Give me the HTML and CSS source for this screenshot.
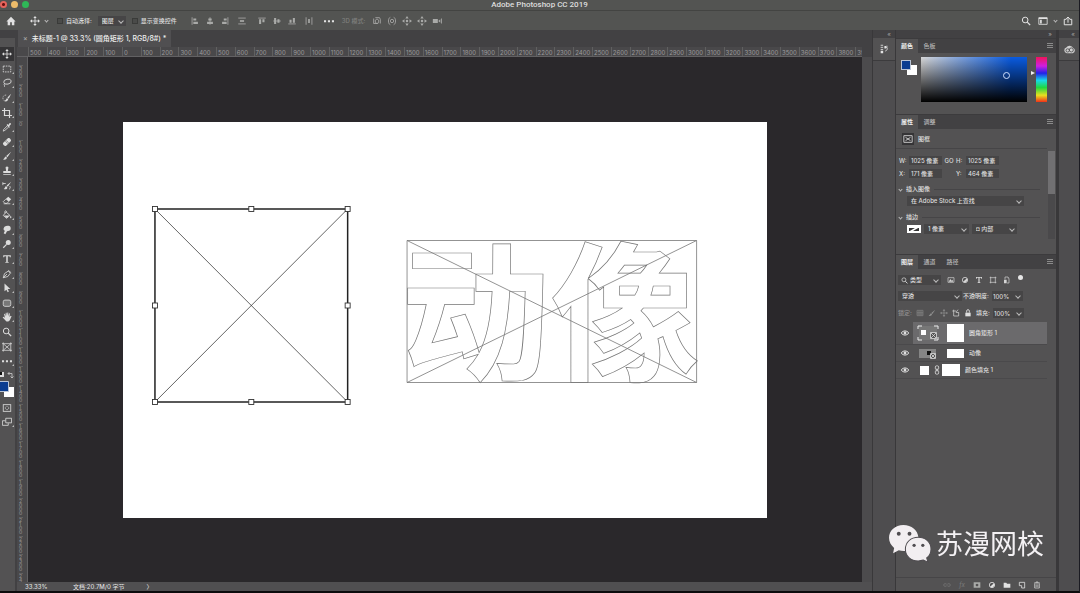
FILE: index.html
```html
<!DOCTYPE html>
<html lang="zh-CN">
<head>
  <meta charset="UTF-8">
  <meta name="viewport" content="width=device-width, initial-scale=1.0">
  <title>Adobe Photoshop CC 2019</title>
  <link rel="stylesheet" href="styles.css">
</head>
<body>
  <!-- icon set -->
  <svg class="sprite" aria-hidden="true">
    <symbol id="i-move" viewBox="0 0 12 12"><path d="M6 2v8M2 6h8" stroke="currentColor"/><path d="M6 0l2 2.500H4zM6 12l2-2.500H4zM0 6l2.500-2v4zM12 6L9.500 4v4z" fill="currentColor"/></symbol>
    <symbol id="i-marquee" viewBox="0 0 12 12"><path d="M1.500 2.500h9v7h-9z" fill="none" stroke="currentColor" stroke-dasharray="2 1"/></symbol>
    <symbol id="i-lasso" viewBox="0 0 12 12"><ellipse cx="6.500" cy="4.500" rx="4.500" ry="3" transform="rotate(-12 6 4)" fill="none" stroke="currentColor"/><path d="M3 6.500c-1.500 1 .5 2 0 4" fill="none" stroke="currentColor"/></symbol>
    <symbol id="i-quick" viewBox="0 0 12 12"><path d="M5 2.500c-6 0-4.500 8 .5 7.500" fill="none" stroke="currentColor" stroke-dasharray="1 1"/><path d="M11 1L6.500 5.500l1.500 1.500zM6 6c-1 1-1 2.500-3 3.500 2.500 1 4 0 4.500-2z" fill="currentColor"/></symbol>
    <symbol id="i-crop" viewBox="0 0 12 12"><path d="M3 0v9h9M0 3h9v9" fill="none" stroke="currentColor" stroke-width="1.400"/></symbol>
    <symbol id="i-dropper" viewBox="0 0 12 12"><path d="M6.500 4.500L2 9l-.5 2L3.500 10 8 6" fill="none" stroke="currentColor"/><path d="M5.500 3.500l1-1 1 1L9 1.500c1-1 2.500.5 1.500 1.500L8.500 5l1 1-1 1z" fill="currentColor"/></symbol>
    <symbol id="i-heal" viewBox="0 0 12 12"><path d="M7 1.500c1.500-1.500 5 2 3.500 3.500L5 10.500C3.500 12 0 8.500 1.500 7z" fill="currentColor"/><path d="M5 4l3 3M4 5l3 3" stroke="#535253" stroke-width=".7"/></symbol>
    <symbol id="i-brush" viewBox="0 0 12 12"><path d="M11 1L5 6l1.500 1.500zM4.500 6.500C3 7 3.500 9 1 10c2.500 1 4.500 0 5-2z" fill="currentColor"/></symbol>
    <symbol id="i-stamp" viewBox="0 0 12 12"><path d="M4.500 3a1.700 1.700 0 1 1 3 0L7 6h3.500v2.500h-9V6H5zM1.500 9.500h9v1h-9z" fill="currentColor"/></symbol>
    <symbol id="i-history" viewBox="0 0 12 12"><path d="M11 1L5.500 5.500 7 7zM5 6C3.500 6.500 4 8.500 2 9.500c2.500 1 4 0 4.500-1.500z" fill="currentColor"/><path d="M1 3h3.500M1 1.500V5M9 6c1.500 1 1 3-.5 4" fill="none" stroke="currentColor"/></symbol>
    <symbol id="i-eraser" viewBox="0 0 12 12"><path d="M7.500 2L11 5 8 8 4.500 4.800z" fill="currentColor"/><path d="M4.500 5L1.500 8l2 2h2.500L8 8M2 10.500h8" fill="none" stroke="currentColor"/></symbol>
    <symbol id="i-bucket" viewBox="0 0 12 12"><path d="M5 2.500L9.500 6.500 5.500 10 1.500 6.500zM3.500 4V1.500c1-1 2-.5 2 1" fill="none" stroke="currentColor"/><path d="M2.500 6.500h6.500l-3.500 3zM10.500 6.500c1 1.500 1 3 0 3.500-1-.5-1-2 0-3.500z" fill="currentColor"/></symbol>
    <symbol id="i-smudge" viewBox="0 0 12 12"><path d="M3 2c2-1.500 6-1.500 7 0 1 2 .5 4-1.500 5L6 7.500 4 11 2 10l1.500-3C1 6 2 3 3 2z" fill="currentColor"/></symbol>
    <symbol id="i-dodge" viewBox="0 0 12 12"><circle cx="7.500" cy="4.200" r="3" fill="currentColor"/><path d="M5.500 6.500L1.500 10.500" stroke="currentColor" stroke-width="1.400"/></symbol>
    <symbol id="i-type" viewBox="0 0 12 12"><path d="M1.500 1.500h9v2.500h-1L9 2.800H6.900v6.700H8v1H4v-1h1.100V2.800H3L2.500 4h-1z" fill="currentColor"/></symbol>
    <symbol id="i-pen" viewBox="0 0 12 12"><path d="M1.500 10.500L3 5.500l4.500-3 2.500 2.500-3 4zM1.500 10.500L6 6M7.500 1.500l3.500 3" fill="none" stroke="currentColor"/></symbol>
    <symbol id="i-arrow" viewBox="0 0 12 12"><path d="M3 .5v9.500l2.300-2L6.800 11l1.500-.7-1.500-3H10z" fill="currentColor"/></symbol>
    <symbol id="i-rect" viewBox="0 0 12 12"><rect x="1.500" y="2.500" width="9" height="7.500" rx="2" fill="#777" stroke="currentColor"/></symbol>
    <symbol id="i-hand" viewBox="0 0 12 12"><path d="M3.500 2l.7 3 .3-4h1l.4 3.500L6.500.5h1V5l1-3.500 1 .3L9 6l1.500-1.500 1 .5-2 4.500C8 12 5 12 4 10L.8 6.500l1-.8L3.500 7 2.500 2.500z" fill="currentColor"/></symbol>
    <symbol id="i-zoom" viewBox="0 0 12 12"><circle cx="5" cy="4.800" r="3.400" fill="none" stroke="currentColor" stroke-width="1.200"/><path d="M7.500 7.300L11 11" stroke="currentColor" stroke-width="1.600"/></symbol>
    <symbol id="i-frame" viewBox="0 0 12 12"><path d="M0 2h12M0 10h12M1.500 .5v11M10.500 .5v11M2 2.500l8 7M10 2.500l-8 7" fill="none" stroke="currentColor" stroke-width=".9"/></symbol>
    <symbol id="i-framebox" viewBox="0 0 12 12"><path d="M1 2h10v8H1zM3 4l6 4M9 4L3 8" fill="none" stroke="currentColor"/></symbol>
    <symbol id="i-dots" viewBox="0 0 12 12"><path d="M0 5h2.500v2.500H0zM4.700 5h2.500v2.500H4.700zM9.500 5H12v2.500H9.500z" fill="currentColor"/></symbol>
    <symbol id="i-mask" viewBox="0 0 12 12"><rect x="1.500" y="2" width="9" height="8" fill="none" stroke="currentColor"/><circle cx="6" cy="6" r="2" fill="none" stroke="currentColor" stroke-dasharray="1 .6"/></symbol>
    <symbol id="i-screen" viewBox="0 0 12 12"><path d="M4.500 1.500h7v5.500h-7zM4 4.500H.5v5.500h7V7.500" fill="none" stroke="currentColor"/></symbol>
    <symbol id="i-home" viewBox="0 0 12 12"><path d="M6 1L.5 6.500H2V11h3V7.500h2V11h3V6.500h1.500z" fill="currentColor"/></symbol>
    <symbol id="i-al" viewBox="0 0 12 12"><path d="M2.500 1.500v9" stroke="currentColor"/><path d="M4 3h3.500v2.500H4zM4 7h5.500v2.500H4z" fill="currentColor"/></symbol>
    <symbol id="i-ac" viewBox="0 0 12 12"><path d="M6 1.500v9" stroke="currentColor"/><path d="M4 3h4v2.500H4zM2.500 7h7v2.500h-7z" fill="currentColor"/></symbol>
    <symbol id="i-dist" viewBox="0 0 12 12"><path d="M1.500 2.500h9M1.500 9.500h9" stroke="currentColor"/><path d="M3.500 5h5v2h-5z" fill="currentColor"/></symbol>
    <symbol id="i-orbit" viewBox="0 0 12 12"><path d="M2 3v6h5M4 2h5l1 2v5M4 5l2-1.500L8 5v3L6 9 4 8z" fill="none" stroke="currentColor"/></symbol>
    <symbol id="i-roll" viewBox="0 0 12 12"><circle cx="6" cy="6" r="2" fill="none" stroke="currentColor"/><path d="M4 1.500c-3 1-3 8 0 9M8 1.500c3 1 3 8 0 9" fill="none" stroke="currentColor"/></symbol>
    <symbol id="i-slide" viewBox="0 0 12 12"><circle cx="6" cy="6" r="1.500" fill="currentColor"/><path d="M6 0l2 3H4zM6 12l2-3H4zM0 6l3-2v4zM12 6L9 4v4z" fill="currentColor"/></symbol>
    <symbol id="i-cam" viewBox="0 0 12 12"><path d="M1 3.500h6v5H1zM7.500 6L10 4v4zM11 3h1v6h-1z" fill="currentColor"/></symbol>
    <symbol id="i-layout" viewBox="0 0 12 12"><path d="M1 2h10v8H1z" fill="none" stroke="currentColor"/><path d="M1 2h10v1.500H1zM2.500 4.500h2v4.500h-2z" fill="currentColor"/></symbol>
    <symbol id="i-share" viewBox="0 0 12 12"><path d="M4 4H1.500v6.500h9V4H8M6 8V1.500M3.800 3.500L6 1.200l2.200 2.300" fill="none" stroke="currentColor" stroke-width="1.200"/></symbol>
    <symbol id="i-panel" viewBox="0 0 12 12"><path d="M2 1.500h3M2 4h3M2 6.500h3M7 4h2.500V2M9.500 4c1 2 0 4-2 4.500" fill="none" stroke="currentColor"/><path d="M2 8h3v3H2zM6.500 2.500h2v3h-2z" fill="currentColor"/></symbol>
    <symbol id="i-cc" viewBox="0 0 14 12"><path d="M4 10a3.200 3.200 0 0 1-.5-6.200 4.300 4.300 0 0 1 7.500.5A3 3 0 0 1 10.500 10z" fill="#cfcfcf"/><circle cx="5" cy="7" r="1.800" fill="none" stroke="#535253"/><circle cx="9" cy="6.500" r="2.200" fill="none" stroke="#535253"/></symbol>
    <symbol id="i-image" viewBox="0 0 12 12"><path d="M1.500 2.500h9v7h-9z" fill="none" stroke="currentColor"/><path d="M2.500 8.500l2.500-4 2 2.500 1-1.500 1.500 3z" fill="currentColor"/></symbol>
    <symbol id="i-adjust" viewBox="0 0 12 12"><circle cx="6" cy="6" r="4" fill="none" stroke="currentColor" stroke-width="1.200"/><path d="M8.800 3.200a4 4 0 0 1-5.600 5.600z" fill="currentColor"/></symbol>
    <symbol id="i-shape" viewBox="0 0 12 12"><path d="M2.500 1v10M9.500 1v10M1 2.500h10M1 9.500h10" stroke="currentColor"/></symbol>
    <symbol id="i-smart" viewBox="0 0 12 12"><path d="M3 5V1.500h4l2 2v7H6" fill="none" stroke="currentColor"/><path d="M1.500 5.500h4V11h-4zM7 1.500v2h2" fill="currentColor"/></symbol>
    <symbol id="i-grid" viewBox="0 0 12 12"><path d="M1.500 2h9v8h-9zM4.500 2v8M7.500 2v8M1.500 5h9M1.500 7.500h9" fill="none" stroke="currentColor" stroke-width=".8"/></symbol>
    <symbol id="i-lock" viewBox="0 0 12 12"><path d="M2 5.500h8v5.500H2z" fill="currentColor"/><path d="M4 5.500V3a2 2 0 0 1 4 0v2.500" fill="none" stroke="currentColor" stroke-width="1.300"/></symbol>
    <symbol id="i-board" viewBox="0 0 12 12"><path d="M2.500 1v9.500H10V5M0.500 3H6M9 1L6 5l4 .5" fill="none" stroke="currentColor"/></symbol>
    <symbol id="i-eye" viewBox="0 0 12 12"><path d="M1.500 6C3.500 2.700 8.500 2.700 10.500 6 8.500 9.300 3.500 9.300 1.500 6z" fill="none" stroke="currentColor" stroke-width="1.200"/><circle cx="6" cy="6" r="1.700" fill="currentColor"/></symbol>
    <symbol id="i-link" viewBox="0 0 12 12"><rect x="4" y="1" width="4" height="4.500" rx="1.500" fill="none" stroke="currentColor"/><rect x="4" y="6.500" width="4" height="4.500" rx="1.500" fill="none" stroke="currentColor"/><path d="M6 4v4" stroke="currentColor"/></symbol>
    <symbol id="i-hlink" viewBox="0 0 12 12"><path d="M5 4H3a2 2 0 0 0 0 4h2M7 4h2a2 2 0 0 1 0 4H7M4 6h4" fill="none" stroke="currentColor"/></symbol>
    <symbol id="i-maskadd" viewBox="0 0 12 12"><path d="M1 2h10v8H1zM6 4a2 2 0 1 0 .1 0z" fill="currentColor" fill-rule="evenodd"/></symbol>
    <symbol id="i-folder" viewBox="0 0 12 12"><path d="M1 2.500h4l1 1.500h5v6H1z" fill="currentColor"/></symbol>
    <symbol id="i-new" viewBox="0 0 12 12"><path d="M2 2h8v8.500H5.500V7H2z" fill="none" stroke="currentColor" stroke-width="1.200"/></symbol>
    <symbol id="i-trash" viewBox="0 0 12 12"><path d="M1.500 3h9M4.500 3V1.500h3V3M2.500 4v6.500h7V4M4.700 5v4M7.300 5v4" fill="none" stroke="currentColor"/></symbol>
  </svg>

  <header class="titlebar">
    <div class="lights"><i class="red"></i><i class="yellow"></i><i class="green"></i></div>
    <h1>Adobe Photoshop CC 2019</h1>
  </header>

  <div class="options">
    <button class="ic bright home" aria-label="主页"><svg><use href="#i-home"/></svg></button>
    <button class="ic bright" aria-label="移动工具"><svg><use href="#i-move"/></svg></button>
    <i class="chev"></i>
    <label class="check auto"><input type="checkbox">自动选择:</label>
    <span class="sel layer-sel"><select aria-label="自动选择"><option>图层</option></select></span>
    <label class="check show"><input type="checkbox">显示变换控件</label>
    <div class="icons">
      <button class="ic" aria-label="左对齐"><svg><use href="#i-al"/></svg></button>
      <button class="ic" aria-label="水平居中"><svg><use href="#i-ac"/></svg></button>
      <button class="ic flip-x" aria-label="右对齐"><svg><use href="#i-al"/></svg></button>
      <button class="ic wide" aria-label="垂直分布"><svg><use href="#i-dist"/></svg></button>
    </div>
    <div class="icons">
      <button class="ic turn" aria-label="顶对齐"><svg><use href="#i-al"/></svg></button>
      <button class="ic turn" aria-label="垂直居中"><svg><use href="#i-ac"/></svg></button>
      <button class="ic turn-back" aria-label="底对齐"><svg><use href="#i-al"/></svg></button>
      <button class="ic turn wide" aria-label="水平分布"><svg><use href="#i-dist"/></svg></button>
    </div>
    <button class="ic bright more" aria-label="更多"><svg><use href="#i-dots"/></svg></button>
    <span class="mode">3D 模式:</span>
    <div class="icons mode-icons">
      <button class="ic" aria-label="环绕"><svg><use href="#i-orbit"/></svg></button>
      <button class="ic" aria-label="滚动"><svg><use href="#i-roll"/></svg></button>
      <button class="ic" aria-label="平移"><svg><use href="#i-slide"/></svg></button>
      <button class="ic" aria-label="滑动"><svg><use href="#i-slide"/></svg></button>
      <button class="ic" aria-label="缩放相机"><svg><use href="#i-cam"/></svg></button>
    </div>
    <div class="right">
      <button class="ic bright" aria-label="搜索"><svg><use href="#i-zoom"/></svg></button>
      <button class="ic bright" aria-label="工作区"><svg><use href="#i-layout"/></svg></button>
      <i class="chev"></i>
      <button class="ic bright" aria-label="共享"><svg><use href="#i-share"/></svg></button>
    </div>
  </div>

  <main class="workspace">
    <nav class="toolbar" aria-label="工具">
      <div class="grip"></div>
      <div class="tools">
        <button class="tool active" aria-label="移动"><svg><use href="#i-move"/></svg></button>
        <button class="tool" aria-label="选框"><svg><use href="#i-marquee"/></svg></button>
        <button class="tool" aria-label="套索"><svg><use href="#i-lasso"/></svg></button>
        <button class="tool" aria-label="快速选择"><svg><use href="#i-quick"/></svg></button>
        <button class="tool" aria-label="裁剪"><svg><use href="#i-crop"/></svg></button>
        <button class="tool" aria-label="吸管"><svg><use href="#i-dropper"/></svg></button>
        <button class="tool" aria-label="修复画笔"><svg><use href="#i-heal"/></svg></button>
        <button class="tool" aria-label="画笔"><svg><use href="#i-brush"/></svg></button>
        <button class="tool" aria-label="图章"><svg><use href="#i-stamp"/></svg></button>
        <button class="tool" aria-label="历史画笔"><svg><use href="#i-history"/></svg></button>
        <button class="tool" aria-label="橡皮擦"><svg><use href="#i-eraser"/></svg></button>
        <button class="tool" aria-label="油漆桶"><svg><use href="#i-bucket"/></svg></button>
        <button class="tool" aria-label="涂抹"><svg><use href="#i-smudge"/></svg></button>
        <button class="tool" aria-label="减淡"><svg><use href="#i-dodge"/></svg></button>
        <button class="tool" aria-label="文字"><svg><use href="#i-type"/></svg></button>
        <button class="tool" aria-label="钢笔"><svg><use href="#i-pen"/></svg></button>
        <button class="tool" aria-label="路径选择"><svg><use href="#i-arrow"/></svg></button>
        <button class="tool" aria-label="圆角矩形"><svg><use href="#i-rect"/></svg></button>
        <button class="tool" aria-label="抓手"><svg><use href="#i-hand"/></svg></button>
        <button class="tool plain" aria-label="缩放"><svg><use href="#i-zoom"/></svg></button>
        <button class="tool plain" aria-label="图框"><svg><use href="#i-frame"/></svg></button>
        <button class="tool" aria-label="编辑工具栏"><svg><use href="#i-dots"/></svg></button>
      </div>
      <svg class="swatches" viewBox="0 0 16 28">
        <path d="M0 1h4v5H0z" fill="#ddd"/><path d="M0 1h2v3H0z" fill="#111"/>
        <path d="M8 2.500h4V7M9.500 1L8 2.500 9.500 4M10.500 5.500L12 7l1.500-1.500" fill="none" stroke="#ccc" stroke-width=".8"/>
        <path d="M4 16h10v10H4z" fill="#fff"/>
        <path d="M-1 10.500h9.500v10H-1z" fill="#0b3d91" stroke="#b9c4d6"/>
      </svg>
      <button class="tool plain" aria-label="快速蒙版"><svg><use href="#i-mask"/></svg></button>
      <button class="tool" aria-label="屏幕模式"><svg><use href="#i-screen"/></svg></button>
    </nav>

    <section class="document">
      <div class="doc-tabs">
        <button class="doc-tab"><span class="close">×</span>未标题-1 @ 33.3% (圆角矩形 1, RGB/8#) *</button>
      </div>
      <div class="ruler-top"><div class="marks" id="marks-x"></div></div>
      <div class="view">
        <div class="ruler-left"><div class="marks" id="marks-y"></div></div>
        <div class="canvas">
          <svg class="artboard" viewBox="0 0 645 396" preserveAspectRatio="none">
            <g fill="none" stroke="#222">
              <rect x="32" y="87" width="193" height="193" stroke-width="1.500"/>
              <path d="M32 87l193 193M225 87L32 280" stroke-width=".7"/>
            </g>
            <g fill="#fff" stroke="#333" stroke-width=".9">
              <rect x="29.500" y="84.500" width="5" height="5"/><rect x="126" y="84.500" width="5" height="5"/><rect x="222.500" y="84.500" width="5" height="5"/>
              <rect x="29.500" y="181" width="5" height="5"/><rect x="222.500" y="181" width="5" height="5"/>
              <rect x="29.500" y="277.500" width="5" height="5"/><rect x="126" y="277.500" width="5" height="5"/><rect x="222.500" y="277.500" width="5" height="5"/>
            </g>
            <text class="outline-text" x="278" y="247">动像</text>
            <path d="M284.500 118.500h290v142h-290zM284.500 118.500l290 142M574.500 118.500l-290 142" fill="none" stroke="#777" stroke-width=".8"/>
          </svg>
        </div>
        <div class="scroll"></div>
      </div>
      <footer class="status"><span class="pct">33.33%</span><span>文档:20.7M/0 字节</span><span class="next">〉</span></footer>
    </section>

    <aside class="strip">
      <div class="strip-head">«</div>
      <button class="strip-btn" aria-label="历史记录"><svg><use href="#i-panel"/></svg></button>
    </aside>

    <aside class="panels">
      <div class="strip-head">»</div>

      <section class="panel color">
        <div class="tabs"><button class="on">颜色</button><button>色板</button><i class="menu"></i></div>
        <div class="color-body">
          <div class="fgbg"></div>
          <div class="field"><i class="ring"></i></div>
          <div class="hue"></div>
        </div>
      </section>

      <section class="panel props">
        <div class="tabs"><button class="on">属性</button><button>调整</button><i class="menu"></i></div>
        <div class="props-wrap">
          <div class="kind"><span class="kind-icon"><svg><use href="#i-framebox"/></svg></span>图框</div>
          <div class="props-body">
            <div class="fields">
              <div class="size">
                <label for="w">W:</label><input id="w" value="1025 像素"><span class="co">GO</span><label for="h">H:</label><input id="h" value="1025 像素">
                <label for="x">X:</label><input id="x" value="171 像素"><span></span><label for="y">Y:</label><input id="y" value="464 像素">
              </div>
              <h2><i class="chev"></i>插入图像</h2>
              <span class="sel stock"><select aria-label="插入图像"><option>在 Adobe Stock 上查找</option></select></span>
              <h2><i class="chev"></i>描边</h2>
              <div class="stroke">
                <svg class="nostroke" viewBox="0 0 14 8"><path d="M0 0h14v8H0z" fill="#fff"/><path d="M2 3h10v3H2z" fill="#333"/><path d="M1 8L13 1" stroke="#fff" stroke-width="1.500"/></svg>
                <span class="sel"><select aria-label="描边宽度"><option>1 像素</option></select></span>
                <span class="sel"><select aria-label="描边位置"><option>◘ 内部</option></select></span>
              </div>
            </div>
            <div class="bar"><i></i></div>
          </div>
        </div>
      </section>

      <section class="panel layers">
        <div class="tabs"><button class="on">图层</button><button>通道</button><button>路径</button><i class="menu"></i></div>
        <div class="filter">
          <span class="sel kind-sel"><svg><use href="#i-zoom"/></svg><select aria-label="滤镜类型"><option>类型</option></select></span>
          <button class="ic" aria-label="像素"><svg><use href="#i-image"/></svg></button>
          <button class="ic" aria-label="调整"><svg><use href="#i-adjust"/></svg></button>
          <button class="ic" aria-label="文字"><svg><use href="#i-type"/></svg></button>
          <button class="ic" aria-label="形状"><svg><use href="#i-shape"/></svg></button>
          <button class="ic" aria-label="智能对象"><svg><use href="#i-smart"/></svg></button>
          <i class="dot"></i>
        </div>
        <div class="blend">
          <span class="sel blend-sel"><select aria-label="混合模式"><option>穿透</option></select></span>
          <label for="op">不透明度:</label><span class="sel num"><input id="op" value="100%"></span>
        </div>
        <div class="blend locks">
          <span class="dim">锁定:</span>
          <svg class="dim"><use href="#i-grid"/></svg><svg class="dim"><use href="#i-brush"/></svg><svg class="dim"><use href="#i-move"/></svg><svg><use href="#i-board"/></svg><svg><use href="#i-lock"/></svg>
          <label for="fill">填充:</label><span class="sel num"><input id="fill" value="100%"></span>
        </div>
        <ul class="list">
          <li class="row big selected">
            <button class="eye" aria-label="可见性"><svg><use href="#i-eye"/></svg></button>
            <div class="cell">
              <svg class="thumb" viewBox="0 0 24 16"><path d="M2 1h18v14H2z" fill="#777"/><path d="M1 4V1h4M17 1h4v3M1 12v3h4M17 15h4v-3" fill="none" stroke="#eee"/><path d="M4 5h5v5H4z" fill="#fff"/><path d="M13.500 7.500h6v6h-6zM14 8l5 5M19 8l-5 5" fill="#555" stroke="#ddd" stroke-width=".8"/></svg>
              <i class="mask"></i><span>圆角矩形 1</span>
            </div>
          </li>
          <li class="row">
            <button class="eye" aria-label="可见性"><svg><use href="#i-eye"/></svg></button>
            <div class="cell">
              <svg class="thumb" viewBox="0 0 24 16"><path d="M2 4h17v9H2z" fill="#858585"/><path d="M10 6h4v4h-4z" fill="#111"/><path d="M13.500 8.500h5v5h-5zM14 9l4 4M18 9l-4 4" fill="#555" stroke="#ddd" stroke-width=".8"/></svg>
              <i class="mask"></i><span>动像</span>
            </div>
          </li>
          <li class="row fill">
            <button class="eye" aria-label="可见性"><svg><use href="#i-eye"/></svg></button>
            <div class="cell"><i class="chip"></i><svg class="chain"><use href="#i-link"/></svg><i class="mask"></i><span>颜色填充 1</span></div>
          </li>
        </ul>
        <div class="layer-foot">
          <button class="ic dim" aria-label="链接"><svg><use href="#i-hlink"/></svg></button>
          <button class="ic dim fx" aria-label="样式">fx</button>
          <button class="ic" aria-label="蒙版"><svg><use href="#i-maskadd"/></svg></button>
          <button class="ic bright" aria-label="调整图层"><svg><use href="#i-adjust"/></svg></button>
          <button class="ic bright" aria-label="新建组"><svg><use href="#i-folder"/></svg></button>
          <button class="ic bright" aria-label="新建图层"><svg><use href="#i-new"/></svg></button>
          <button class="ic bright" aria-label="删除"><svg><use href="#i-trash"/></svg></button>
        </div>
      </section>
    </aside>

    <aside class="strip last">
      <div class="strip-head">«</div>
      <button class="strip-btn" aria-label="库"><svg><use href="#i-cc"/></svg></button>
    </aside>
  </main>

  <div class="watermark">
    <svg viewBox="0 0 42 38">
      <path d="M15 1C7 1 1 6.500 1 13.500c0 4 2 7.500 5 9.800L5 28.500l5.500-2.800c2 .5 4 .8 6.500.6C29 25.500 30 19 29.700 13 29 6 23 1 15 1z" fill="#f2eef1"/>
      <circle cx="10.500" cy="9.500" r="1.900" fill="#4f4c50"/><circle cx="21" cy="9.500" r="1.900" fill="#4f4c50"/>
      <path d="M29.500 13C22 13 17 18 17 24.500S22 36 29.500 36c1.800 0 3.500-.3 5-.8l4.500 2-1.200-4.200c2.700-2 4.200-5 4.200-8.500C42 18 37 13 29.500 13z" fill="#f2eef1" stroke="#4f4c50"/>
      <circle cx="25.500" cy="20.800" r="1.600" fill="#4f4c50"/><circle cx="34" cy="20.800" r="1.600" fill="#4f4c50"/>
    </svg>
    <span>苏漫网校</span>
  </div>

  <script>
    // ruler labels, one mark for every 100 px
    function fillRuler(id, from, to) {
      const marks = document.getElementById(id);
      for (let n = from; n <= to; n++) {
        const mark = document.createElement('span');
        mark.textContent = Math.abs(n * 100);
        marks.appendChild(mark);
      }
    }
    fillRuler('marks-x', -5, 39);
    fillRuler('marks-y', -3, 24);
  </script>
</body>
</html>
```
FILE: styles.css
```css
:root {
  --bar: #535452;
  --panel: #535253;
  --dark: #424143;
  --field: #464546;
  --line: #3c3b3d;
  --canvas: #2a282b;
  --text: #dedede;
  --muted: #a8a8a8;
}

* {
  margin: 0;
  padding: 0;
  box-sizing: border-box;
}

body {
  display: flex;
  flex-direction: column;
  height: 100vh;
  overflow: hidden;
  background: var(--panel);
  border-right: 1px solid #1b1b22;
  border-bottom: 2px solid #0c0b0c;
  color: var(--text);
  font: 500 6px/8px Inter, "Noto Sans CJK SC", sans-serif;
}

button, input, select {
  font: inherit;
  color: inherit;
  background: none;
  border: 0;
  border-radius: 0;
  outline: 0;
}

i { font-style: normal; }
svg { display: block; width: 10px; height: 10px; flex: none; }
.sprite { position: absolute; width: 0; height: 0; }

.chev {
  width: 3px;
  height: 3px;
  border: solid #bbb;
  border-width: 0 1px 1px 0;
  transform: rotate(45deg);
  flex: none;
}

.ic {
  display: flex;
  align-items: center;
  justify-content: center;
  width: 12px;
  height: 12px;
  color: #a9aaa8;
  flex: none;
}
.ic.bright { color: #e2e2e2; }
.dim { color: #909090; }
.flip-x svg { transform: scaleX(-1); }
.turn svg { transform: rotate(90deg); }
.turn-back svg { transform: rotate(-90deg); }

/* title bar */
.titlebar {
  position: relative;
  height: 11px;
  background: var(--bar);
  border-bottom: 1px solid #434442;
  flex: none;
}
.titlebar h1 {
  font: 500 8px/10px Roboto, sans-serif;
  text-align: center;
}
.lights {
  position: absolute;
  left: 0;
  top: 1px;
  display: flex;
  gap: 4px;
}
.lights i { width: 7px; height: 7px; border-radius: 50%; }
.red { background: radial-gradient(circle, #611 1px, #e8635b 2px); }
.yellow { background: #eebc6a; }
.green { background: #2fb757; }

/* options bar */
.options {
  display: flex;
  align-items: center;
  height: 19px;
  padding: 0 5px;
  background: var(--bar);
  flex: none;
}
.home { margin-right: 12px; }
.options > .chev { margin-left: 4px; }
.check { display: flex; align-items: center; gap: 3px; white-space: nowrap; }
.check input {
  appearance: none;
  width: 6px;
  height: 6px;
  border: 1px solid #3a3b39;
  background: #4a4b49;
}
.auto { margin-left: 9px; }
.layer-sel { width: 28px; margin: 0 6px; }
.show { width: 57px; }
.icons { display: flex; gap: 3px; }
.wide { margin-left: 2px; }
.icons + .icons { margin-left: 8px; }
.more { margin: 0 7px 0 8px; }
.mode { color: #7f807e; width: 29px; white-space: nowrap; }
.right { display: flex; align-items: center; gap: 5px; margin-left: auto; }

.sel {
  position: relative;
  display: flex;
  align-items: center;
  height: 10px;
  background: var(--field);
}
.sel select, .sel input {
  appearance: none;
  width: 100%;
  min-width: 0;
  height: 10px;
  padding: 0 9px 0 4px;
}
.sel::after {
  content: "";
  position: absolute;
  right: 3px;
  top: 3px;
  width: 3px;
  height: 3px;
  border: solid #bbb;
  border-width: 0 1px 1px 0;
  transform: rotate(45deg);
}

.workspace { display: flex; flex: 1; min-height: 0; background: var(--dark); }

/* tools */
.toolbar {
  display: flex;
  flex-direction: column;
  width: 17px;
  background: var(--panel);
  border-right: 2px solid var(--dark);
}
.grip { height: 8px; margin-bottom: 9px; background: var(--dark); }
.tools { display: grid; grid-auto-rows: 1fr; height: 322px; }
.tool {
  position: relative;
  display: flex;
  align-items: center;
  justify-content: center;
  width: 14px;
  height: 14px;
  color: #dcdcdc;
}
.tool.active { background: #353436; }
.tool::after {
  content: "";
  position: absolute;
  right: 0;
  bottom: 2px;
  border: 1px solid;
  border-color: transparent #bbb #bbb transparent;
}
.tool.plain::after, .tool.active::after { display: none; }
.swatches { width: 16px; height: 28px; margin: 2px 0; }

/* document */
.document { display: flex; flex-direction: column; flex: 1; min-width: 0; }
.doc-tabs { display: flex; height: 17px; }
.doc-tab {
  display: flex;
  align-items: center;
  gap: 4px;
  padding: 0 5px;
  margin-left: 1px;
  background: #504f51;
  color: #eee;
  font-size: 7px;
  white-space: nowrap;
}
.close { color: #aaa; }
.ruler-top {
  height: 10px;
  padding-left: 11px;
  margin-right: 10px;
  overflow: hidden;
  background: #49484a;
  border-bottom: 1px solid #626163;
  color: #9b9a9c;
  font-weight: 400;
  line-height: 11px;
}
.ruler-top .marks {
  display: grid;
  grid-auto-flow: column;
  grid-auto-columns: 1fr;
  width: calc(100% + 12px);
}
.ruler-top span { border-left: 1px solid #606060; padding-left: 1px; min-width: 0; }
.view { display: flex; flex: 1; min-height: 0; }
.ruler-left {
  width: 11px;
  overflow: hidden;
  padding: 8px 4px 0 2px;
  background: #49484a;
  border-right: 1px solid #626163;
  color: #8d8c8e;
}
.ruler-left .marks { display: grid; grid-auto-rows: 1fr; height: calc(100% + 10px); }
.ruler-left span {
  width: 4px;
  min-height: 0;
  border-top: 1px solid #606060;
  font-size: 5px;
  line-height: 4px;
  word-break: break-all;
}
.canvas { flex: 1; display: flex; padding: 65px 95px 64px; background: var(--canvas); min-width: 0; }
.artboard { flex: 1; width: auto; height: 100%; min-width: 0; background: #fff; }
.outline-text {
  font: 700 150px "Noto Sans CJK SC", sans-serif;
  fill: none;
  stroke: #777;
  stroke-width: .7px;
}
.scroll { width: 10px; background: #4c4b4d; }
.status {
  display: flex;
  align-items: center;
  height: 9px;
  padding-left: 8px;
  background: #504f51;
}
.pct { width: 48px; }
.next { margin-left: 22px; }

/* collapsed panels */
.strip {
  width: 23px;
  border-left: 1px solid #39383a;
  background: #4e4d4f;
}
.strip-head {
  height: 8px;
  padding-right: 4px;
  background: var(--dark);
  color: #999;
  text-align: right;
  line-height: 7px;
}
.strip-btn {
  display: flex;
  align-items: center;
  justify-content: center;
  width: 100%;
  height: 23px;
  background: var(--panel);
  border-bottom: 1px solid var(--line);
  color: #e4e4e4;
}
.last { width: 21px; }
.last svg { width: 13px; height: 11px; }

/* panels */
.panels {
  display: flex;
  flex-direction: column;
  width: 163px;
  border: solid #39383a;
  border-width: 0 2px 0 1px;
  background: var(--panel);
}
.tabs { display: flex; height: 15px; background: var(--dark); border-top: 1px solid var(--line); }
.tabs button { width: 23px; color: #b4b4b4; white-space: nowrap; }
.tabs .on { width: 22px; background: var(--panel); color: #eee; font-weight: 700; }
.menu {
  width: 6px;
  height: 5px;
  margin: 4px 3px 0 auto;
  background: repeating-linear-gradient(#8a8a8a 0 1px, transparent 1px 2px);
}
.color-body { display: flex; padding: 4px 9px 12px 5px; height: 61px; }
.fgbg {
  width: 20px;
  background:
    linear-gradient(#0b3d91, #0b3d91) 1px 4px / 8px 8px no-repeat,
    linear-gradient(#b9c4d6, #b9c4d6) 0 3px / 10px 10px no-repeat,
    linear-gradient(#fff, #fff) 6px 8px / 10px 10px no-repeat;
}
.field {
  position: relative;
  flex: 1;
  background: linear-gradient(transparent, #000), linear-gradient(90deg, #d8d8d8, #0a5be0 85%);
}
.ring {
  position: absolute;
  left: 82px;
  top: 15px;
  width: 7px;
  height: 7px;
  border: 1px solid #cfe0ff;
  border-radius: 50%;
}
.hue {
  position: relative;
  width: 11px;
  margin-left: 9px;
  background: linear-gradient(#f0145a, #d01ee0 20%, #2222e8 36%, #18d8e8 52%, #20d840 68%, #e8e020 85%, #f03018);
}
.hue::before {
  content: "";
  position: absolute;
  left: -5px;
  top: 14px;
  border: 2px solid transparent;
  border-left: 4px solid #eee;
}
.props-wrap { height: 125px; }
.kind {
  display: flex;
  align-items: center;
  gap: 4px;
  height: 20px;
  margin: 0 9px 0 0;
  padding-left: 6px;
  border-bottom: 1px solid #464547;
}
.kind-icon { padding: 1px; background: #353436; }
.props-body { display: flex; padding-top: 2px; }
.fields { flex: 1; padding: 5px 0 0 3px; }
.size {
  display: grid;
  grid-template-columns: 10px 33px 14px 10px 33px;
  align-items: center;
  row-gap: 4px;
}
.size input { width: 100%; height: 9px; padding-left: 2px; background: var(--field); }
.size .co { text-align: center; }
.fields h2 {
  display: flex;
  align-items: center;
  gap: 4px;
  margin-top: 7px;
  font: inherit;
}
.fields h2::after { content: ""; flex: 1; margin-right: 8px; border-top: 1px solid #464547; }
.stock { margin: 3px 0 0 8px; width: 117px; }
.stroke { display: flex; gap: 3px; margin: 3px 0 0 8px; }
.nostroke { width: 14px; height: 8px; margin-top: 1px; }
.stroke .sel { width: 45px; }
.bar { width: 7px; height: 88px; margin-right: 1px; background: #4a494b; }
.bar i { display: block; height: 43px; background: #717072; }

/* layers */
.layers { display: flex; flex-direction: column; flex: 1; }
.filter { display: flex; align-items: center; gap: 2px; padding: 5px 0 0 2px; height: 17px; }
.filter .ic { color: #d6d6d6; }
.filter .ic svg { width: 8px; height: 8px; }
.kind-sel { width: 43px; padding-left: 3px; margin-right: 2px; }
.kind-sel svg { width: 7px; height: 7px; }
.kind-sel select { padding-left: 2px; }
.dot { width: 5px; height: 5px; margin: 0 0 5px 3px; border-radius: 50%; background: #e6e6e6; }
.blend { display: flex; align-items: center; height: 10px; padding-left: 2px; margin-top: 5px; white-space: nowrap; }
.blend-sel { width: 64px; margin-right: 1px; }
.blend label { width: 29px; }
.num { width: 31px; }
.num input { padding: 0 0 0 1px; }
.locks { gap: 4px; margin-top: 7px; }
.locks svg { width: 8px; height: 8px; }
.locks .dim:first-child { width: 14px; }
.locks label { width: 13px; }
.list { list-style: none; margin: 4px 9px 0 0; }
.row { display: flex; height: 17px; border-bottom: 1px solid #4a494b; }
.row.big { height: 23px; }
.eye { display: flex; align-items: center; justify-content: center; width: 17px; }
.cell { display: flex; align-items: center; flex: 1; padding-left: 4px; }
.selected .cell { background: #6b6a6c; }
.thumb { width: 24px; height: 16px; margin-right: 6px; }
.mask { width: 17px; height: 9px; margin-right: 5px; background: #fff; }
.big .mask { height: 18px; }
.fill .cell { padding-left: 7px; }
.fill .mask { width: 18px; height: 12px; }
.chip { width: 9px; height: 9px; margin-right: 3px; background: #fff; }
.chain { width: 10px; height: 10px; }
.layer-foot {
  display: flex;
  align-items: center;
  justify-content: flex-end;
  gap: 3px;
  height: 14px;
  margin-top: auto;
  padding-right: 13px;
  border-top: 1px solid #464547;
}
.layer-foot svg { width: 8px; height: 8px; }
.layer-foot .dim { color: #777; }
.fx { font-style: italic; }

.watermark {
  position: fixed;
  right: 36px;
  bottom: 30px;
  display: flex;
  align-items: center;
  gap: 5px;
  color: #f4f1f4;
  font: 400 27px/40px "Noto Sans CJK SC", sans-serif;
}
.watermark svg { width: 43px; height: 39px; }
```
